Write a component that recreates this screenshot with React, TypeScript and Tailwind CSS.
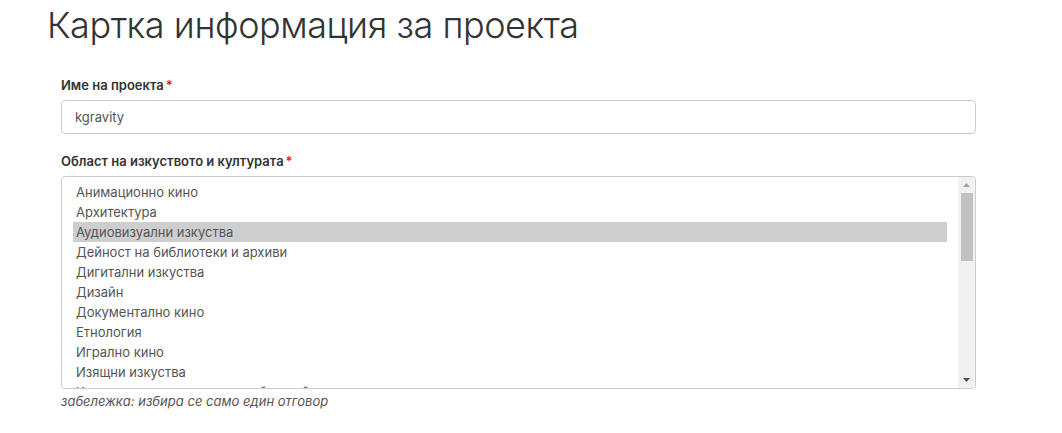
const areas = [
  "Анимационно кино",
  "Архитектура",
  "Аудиовизуални изкуства",
  "Дейност на библиотеки и архиви",
  "Дигитални изкуства",
  "Дизайн",
  "Документално кино",
  "Етнология",
  "Игрално кино",
  "Изящни изкуства",
  "Културно наследство и музейна дейност",
];

const selected = "Аудиовизуални изкуства";

const App = () => {
  return (
    <div lang="bg" className="min-h-screen bg-white font-['Inter',sans-serif] text-[#333]">
      <div className="pl-[47px] pr-[86px]">
        <h1 className="text-[36px] leading-[50px] font-light tracking-[-0.45px] text-[#333]">
          Картка информация за проекта
        </h1>

        <div className="mt-[26px] pl-[14px]">
          <label className="block text-[13px] font-semibold leading-[18px] text-[#333]">
            Име на проекта<span className="text-[#e02020] ml-[2px]">*</span>
          </label>
          <input
            defaultValue="kgravity"
            className="mt-[6px] block w-full h-[34px] rounded-[4px] border border-[#ccc] px-[13px] text-[13px] text-[#555] outline-none"
          />

          <label className="mt-[18px] block text-[13px] font-semibold leading-[18px] text-[#333]">
            Област на изкуството и културата<span className="text-[#e02020] ml-[2px]">*</span>
          </label>
          <div className="mt-[6px] flex h-[213px] overflow-hidden rounded-[4px] border border-[#ccc]">
            <ul className="flex-1 overflow-hidden pl-[11px] pr-[11px] pt-[5px]">
              {areas.map((a) => (
                <li
                  key={a}
                  className={`h-[20px] px-[3px] text-[13px] leading-[20px] text-[#555] ${
                    a === selected ? "bg-[#cecece] text-[#333]" : ""
                  }`}
                >
                  {a}
                </li>
              ))}
            </ul>
            <div className="flex w-[17px] flex-col items-center bg-[#f1f1f1]">
              <div className="flex h-[16px] w-full items-center justify-center">
                <svg width="7" height="4" viewBox="0 0 7 4">
                  <path d="M3.5 0L7 4H0z" fill="#a3a3a3" />
                </svg>
              </div>
              <div className="h-[68px] w-[12px] bg-[#c1c1c1]" />
              <div className="flex-1" />
              <div className="flex h-[16px] w-full items-center justify-center">
                <svg width="7" height="4" viewBox="0 0 7 4">
                  <path d="M0 0H7L3.5 4z" fill="#505050" />
                </svg>
              </div>
            </div>
          </div>
          <p className="mt-[3px] text-[13px] italic leading-[18px] text-[#555]">
            забележка: избира се само един отговор
          </p>
        </div>
      </div>
    </div>
  );
};

export default App;
